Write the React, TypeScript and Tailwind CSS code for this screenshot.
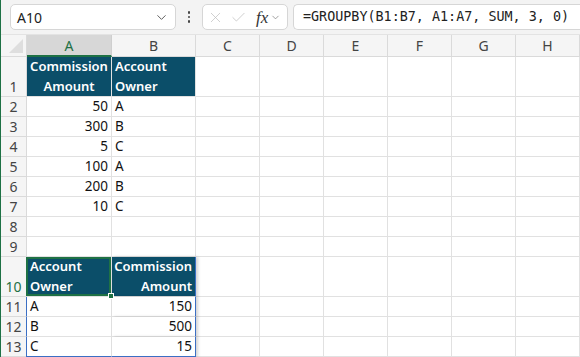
import { ChevronDown, X, Check } from "lucide-react";

type Cell = {
  lines: string[];
  align?: "left" | "right" | "center";
  head?: boolean;
};

type Row = {
  n: number;
  tall?: boolean;
  cells: Cell[];
};

const rows: Row[] = [
  {
    n: 1,
    tall: true,
    cells: [
      { lines: ["Commission", "Amount"], align: "center", head: true },
      { lines: ["Account", "Owner"], align: "left", head: true },
    ],
  },
  { n: 2, cells: [{ lines: ["50"], align: "right" }, { lines: ["A"] }] },
  { n: 3, cells: [{ lines: ["300"], align: "right" }, { lines: ["B"] }] },
  { n: 4, cells: [{ lines: ["5"], align: "right" }, { lines: ["C"] }] },
  { n: 5, cells: [{ lines: ["100"], align: "right" }, { lines: ["A"] }] },
  { n: 6, cells: [{ lines: ["200"], align: "right" }, { lines: ["B"] }] },
  { n: 7, cells: [{ lines: ["10"], align: "right" }, { lines: ["C"] }] },
  { n: 8, cells: [{ lines: [] }, { lines: [] }] },
  { n: 9, cells: [{ lines: [] }, { lines: [] }] },
  {
    n: 10,
    tall: true,
    cells: [
      { lines: ["Account", "Owner"], align: "left", head: true },
      { lines: ["Commission", "Amount"], align: "right", head: true },
    ],
  },
  { n: 11, cells: [{ lines: ["A"] }, { lines: ["150"], align: "right" }] },
  { n: 12, cells: [{ lines: ["B"] }, { lines: ["500"], align: "right" }] },
  { n: 13, cells: [{ lines: ["C"] }, { lines: ["15"], align: "right" }] },
];

const columns = ["A", "B", "C", "D", "E", "F", "G", "H"];
const widths = ["w-[85px]", "w-[84px]", "w-[64px]", "w-[64px]", "w-[64px]", "w-[64px]", "w-[64px]", "w-[64px]"];

function Toolbar() {
  return (
    <div className="h-[35px] bg-[#f3f3f3] border-b border-[#e3e3e3] flex items-center pl-[9px] gap-[5px]">
      <div className="w-[166px] h-[26px] bg-white border border-[#d6d6d6] rounded-[5px] flex items-center justify-between pl-[6px] pr-[6px]">
        <span className="text-[14px] text-[#222]">A10</span>
        <ChevronDown size={15} strokeWidth={1.5} className="text-[#555]" />
      </div>
      <div className="w-[16px] flex flex-col items-center gap-[2px]">
        <span className="w-[2.5px] h-[2.5px] rounded-full bg-[#444]" />
        <span className="w-[2.5px] h-[2.5px] rounded-full bg-[#444]" />
        <span className="w-[2.5px] h-[2.5px] rounded-full bg-[#444]" />
      </div>
      <div className="w-[86px] h-[26px] bg-white border border-[#d6d6d6] rounded-[5px] flex items-center pl-[4px] gap-[6px]">
        <X size={17} strokeWidth={1} className="text-[#bcbcbc]" />
        <Check size={17} strokeWidth={1} className="text-[#bcbcbc]" />
        <span className="ml-[3px] text-[17px] italic text-[#333] leading-none" style={{ fontFamily: "'Liberation Serif', serif" }}>
          fx
        </span>
        <ChevronDown size={11} strokeWidth={1.5} className="text-[#777] -ml-[4px]" />
      </div>
      <div className="flex-1 h-[26px] bg-white border border-r-0 border-[#d6d6d6] rounded-l-[5px] flex items-center pl-[9px]">
        <span className="text-[13.4px] text-[#222]" style={{ fontFamily: "'DejaVu Sans Mono', 'Liberation Mono', monospace" }}>
          =GROUPBY(B1:B7, A1:A7, SUM, 3, 0)
        </span>
      </div>
    </div>
  );
}

function HeaderRow() {
  return (
    <div className="flex h-[22px] bg-[#f5f5f5]">
      <div className="w-[26px] h-full border-r border-b border-[#dadada] flex items-end justify-end pr-[3px] pb-[3px]">
        <div className="w-0 h-0 border-l-[14px] border-l-transparent border-b-[14px] border-b-[#dedede]" />
      </div>
      {columns.map((c, i) => (
        <div
          key={c}
          className={`${widths[i]} h-full flex items-center justify-center text-[14px] ${
            c === "A"
              ? "bg-[#d7d7d7] text-[#1e7145] border-b-2 border-[#1e7145] border-r border-r-[#cfcfcf]"
              : "text-[#444] border-r border-b border-[#dadada]"
          }`}
        >
          {c}
        </div>
      ))}
    </div>
  );
}

function DataCell({ cell, col, row }: { cell: Cell; col: number; row: Row }) {
  const align =
    cell.align === "right"
      ? "items-end text-right pr-[3px]"
      : cell.align === "center"
        ? "items-center text-center"
        : "items-start pl-[3px]";
  const selected = row.n === 10 && col === 0;
  const spill = row.n >= 10;
  let cls = `${widths[col]} h-full flex flex-col justify-end relative ${align}`;
  if (cell.head) {
    cls += " bg-[#0b4e69] text-white font-semibold text-[13px]";
    cls += row.n === 1 && col === 0 ? " border-r border-[#0b4e69]" : " border-r border-[#e1e1e1]";
    cls += " border-b border-[#e1e1e1]";
  } else {
    cls += " bg-white text-[#111] text-[13.5px] border-r border-b border-[#e1e1e1]";
  }
  if (spill && col === 0 && !selected) cls += " border-l border-l-[#3b6fc4] -ml-[1px] w-[86px]";
  if (spill && col === 1) cls += " border-r-[#3b6fc4] shadow-[2px_0_3px_rgba(0,0,0,0.18)] z-10";
  if (row.n === 13) cls += " border-b-[#3b6fc4]";
  return (
    <div className={cls}>
      {cell.lines.map((l) => (
        <div key={l} className="leading-[20px] whitespace-nowrap">
          {l}
        </div>
      ))}
      {selected && (
        <>
          <div className="absolute top-0 -left-[1px] right-0 bottom-0 border-2 border-[#1e7145] pointer-events-none" />
          <div className="absolute -right-[3px] -bottom-[3px] w-[6px] h-[6px] bg-[#1e7145] border border-white z-20" />
        </>
      )}
    </div>
  );
}

function GridRow({ row }: { row: Row }) {
  return (
    <div className={`flex ${row.tall ? "h-[40px]" : "h-[20px]"}`}>
      <div
        className={`w-[26px] h-full border-r border-b border-[#dadada] bg-[#f5f5f5] flex items-end justify-center text-[14px] leading-[19px] ${
          row.n === 10 ? "text-[#1e7145]" : "text-[#444]"
        }`}
      >
        {row.n}
      </div>
      {row.cells.map((c, i) => (
        <DataCell key={i} cell={c} col={i} row={row} />
      ))}
      {columns.slice(2).map((c, i) => (
        <div key={c} className={`${widths[i + 2]} h-full bg-white border-r border-b border-[#e1e1e1]`} />
      ))}
    </div>
  );
}

export default function App() {
  return (
    <div
      className="w-[580px] h-[357px] overflow-hidden bg-white border-l border-[#1e7145]"
      style={{ fontFamily: "'Noto Sans', 'Open Sans', sans-serif" }}
    >
      <Toolbar />
      <HeaderRow />
      {rows.map((r) => (
        <GridRow key={r.n} row={r} />
      ))}
    </div>
  );
}
